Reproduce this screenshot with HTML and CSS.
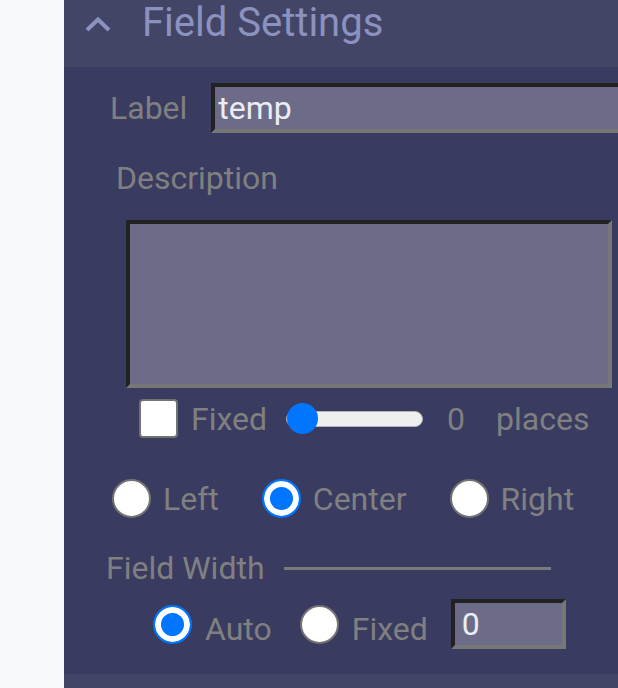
FILE: index.html
```html
<!DOCTYPE html>
<html lang="en">
<head>
    <meta charset="UTF-8">
    <meta name="viewport" content="width=device-width, initial-scale=1.0">
    <title>Field Settings</title>
    <link rel="stylesheet" href="styles.css">
</head>
<body>

    <div class="page">
        <aside class="sidebar"></aside>

        <section class="panel">
            <div class="panel-header">
                <svg class="chevron" width="26" height="16" viewBox="0 0 26 16">
                    <path d="M2 14 L13 3.5 L24 14" fill="none" stroke="#8c92bf" stroke-width="4"/>
                </svg>
                <h2>Field Settings</h2>
            </div>

            <div class="panel-body">
                <div class="label-row">
                    <label for="field-label">Label</label>
                    <input type="text" id="field-label" class="text-input" value="temp">
                </div>

                <p class="desc-title">Description</p>
                <textarea id="field-desc" class="desc-box"></textarea>

                <div class="fixed-row">
                    <input type="checkbox" id="fixed-check" class="check">
                    <label for="fixed-check" class="fixed-text">Fixed</label>
                    <input type="range" id="places" class="slider" min="0" max="10" value="0">
                    <span class="places-value">0</span>
                    <span class="places-text">places</span>
                </div>

                <div class="align-row">
                    <label class="radio-item"><input type="radio" name="align" class="radio"> Left</label>
                    <label class="radio-item"><input type="radio" name="align" class="radio" checked> Center</label>
                    <label class="radio-item"><input type="radio" name="align" class="radio"> Right</label>
                </div>

                <div class="width-title">
                    <p>Field Width</p>
                    <span class="rule"></span>
                </div>

                <div class="width-row">
                    <label class="radio-item auto"><input type="radio" name="width" class="radio" checked> <span>Auto</span></label>
                    <label class="radio-item"><input type="radio" name="width" class="radio"> <span>Fixed</span></label>
                    <input type="text" class="text-input width-input" value="0">
                </div>
            </div>

            <div class="panel-footer"></div>
        </section>
    </div>

</body>
</html>
```

FILE: styles.css
```css
*
{
    padding: 0;
    margin: 0;
    box-sizing: border-box;
}

body
{
    height: 688px;
    overflow: hidden;
    font-family: Roboto, "Noto Sans", sans-serif;
    font-size: 32px;
    color: #808080;
}

.page
{
    display: flex;
    height: 688px;
}

.sidebar
{
    width: 64px;
    flex-shrink: 0;
    background-color: #f8f9fb;
}

.panel
{
    flex: 1;
    display: flex;
    flex-direction: column;
    background-color: #393b60;
    overflow: hidden;
}

.panel-header
{
    height: 67px;
    flex-shrink: 0;
    display: flex;
    align-items: flex-start;
    padding-left: 21px;
    background-color: #434567;
}

.chevron
{
    margin-top: 16px;
    margin-right: 31px;
}

.panel-header h2
{
    font-size: 40px;
    font-weight: 400;
    line-height: 47px;
    margin-top: -1px;
    color: #8c92bf;
    white-space: nowrap;
}

.panel-body
{
    height: 607px;
    flex-shrink: 0;
}

.panel-footer
{
    flex: 1;
    background-color: #434567;
}

.label-row
{
    display: flex;
    align-items: center;
    margin-top: 16px;
    padding-left: 46px;
}

.text-input
{
    height: 50px;
    font-family: inherit;
    font-size: 32px;
    color: #ececf4;
    background-color: #6c6c89;
    border: 4px solid;
    border-color: #222222 #777777 #777777 #222222;
    padding: 0 3px;
    outline: none;
}

.label-row .text-input
{
    width: 430px;
    margin-left: 24px;
}

.desc-title
{
    margin-top: 26px;
    padding-left: 52px;
}

.desc-box
{
    display: block;
    width: 486px;
    height: 168px;
    margin-top: 23px;
    margin-left: 62px;
    background-color: #6c6c89;
    border: 4px solid;
    border-color: #222222 #777777 #777777 #222222;
    resize: none;
    outline: none;
}

.fixed-row
{
    display: flex;
    align-items: center;
    height: 39px;
    margin-top: 11px;
    padding-left: 75px;
}

.check
{
    appearance: none;
    -webkit-appearance: none;
    width: 39px;
    height: 39px;
    background-color: white;
    border: 2px solid #727272;
    border-radius: 4px;
}

.fixed-text
{
    margin-left: 13px;
}

.slider
{
    appearance: none;
    -webkit-appearance: none;
    width: 137px;
    height: 31px;
    margin-left: 19px;
    background: transparent;
}

.slider::-webkit-slider-runnable-track
{
    height: 16px;
    background-color: #efefef;
    border: 1px solid #b2b2b2;
    border-radius: 8px;
}

.slider::-webkit-slider-thumb
{
    -webkit-appearance: none;
    width: 31px;
    height: 31px;
    margin-top: -8.5px;
    border-radius: 50%;
    background-color: #0075ff;
}

.places-value
{
    margin-left: 24px;
}

.places-text
{
    margin-left: 31px;
}

.align-row
{
    display: flex;
    align-items: center;
    gap: 43px;
    height: 39px;
    margin-top: 41px;
    padding-left: 48px;
}

.radio-item
{
    display: flex;
    align-items: center;
    gap: 12px;
}

.radio
{
    appearance: none;
    -webkit-appearance: none;
    width: 39px;
    height: 39px;
    flex-shrink: 0;
    border-radius: 50%;
    background-color: white;
    border: 2px solid #727272;
}

.radio:checked
{
    border-color: #0075ff;
    background-color: #0075ff;
    box-shadow: inset 0 0 0 6px white;
}

.width-title
{
    display: flex;
    align-items: center;
    margin-top: 31px;
    padding-left: 42px;
}

.rule
{
    width: 267px;
    height: 3px;
    margin-left: 19px;
    background-color: #7a7a7a;
}

.width-row
{
    display: flex;
    align-items: center;
    margin-top: 12px;
    padding-left: 89px;
}

.width-row .radio-item
{
    gap: 13px;
}

.width-row .radio-item span
{
    margin-top: 10px;
}

.width-row .auto
{
    margin-right: 28px;
}

.width-input
{
    width: 115px;
    margin-left: 23px;
    padding-left: 7px;
}
```
